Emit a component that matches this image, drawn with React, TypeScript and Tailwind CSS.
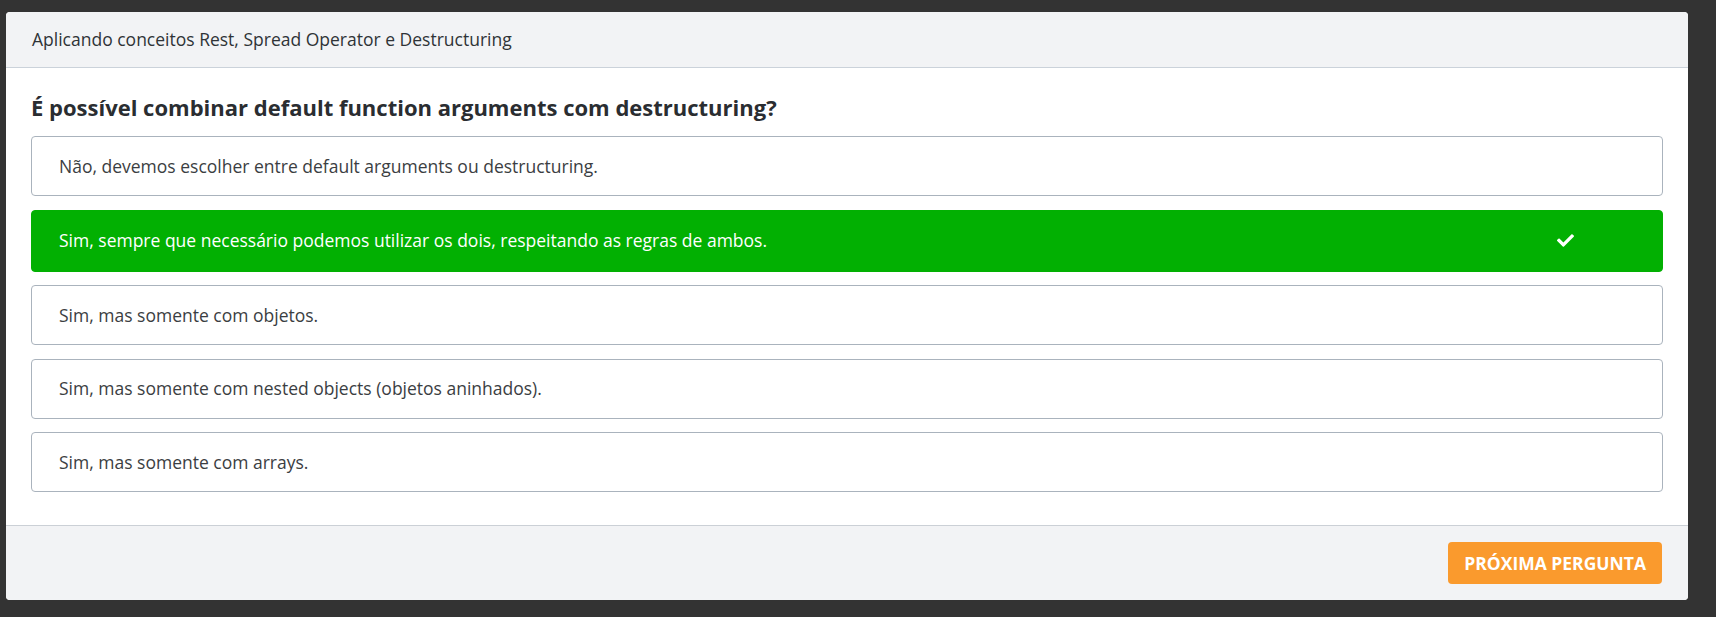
import React from "react";
import { FaCheck } from "react-icons/fa";

const options = [
  { text: "Não, devemos escolher entre default arguments ou destructuring.", correct: false },
  { text: "Sim, sempre que necessário podemos utilizar os dois, respeitando as regras de ambos.", correct: true },
  { text: "Sim, mas somente com objetos.", correct: false },
  { text: "Sim, mas somente com nested objects (objetos aninhados).", correct: false },
  { text: "Sim, mas somente com arrays.", correct: false },
];

const App: React.FC = () => {
  return (
    <div className="min-h-screen bg-[#333333] pt-3 pl-[6px] font-['Open_Sans','Noto_Sans',sans-serif]">
      <div className="w-[1682px] overflow-hidden rounded-[4px] bg-white">
        <div className="flex h-[56px] items-center border-b border-[#cbd2da] bg-[#f2f3f5] px-[26px]">
          <span className="text-[17.5px] text-[#2f3337]">
            Aplicando conceitos Rest, Spread Operator e Destructuring
          </span>
        </div>

        <div className="px-[25px] pt-[24px] pb-[33px]">
          <h2 className="mb-[14px] text-[22px] leading-[30px] font-bold text-[#2a2d31]">
            É possível combinar default function arguments com destructuring?
          </h2>

          <div className="flex flex-col gap-[13.5px]">
            {options.map((opt) => (
              <div
                key={opt.text}
                className={`flex items-center rounded-[4px] border px-[27px] text-[17.5px] ${
                  opt.correct
                    ? "h-[62px] border-[#02b002] bg-[#02b002] text-white"
                    : "h-[60px] border-[#aab3bd] bg-white text-[#3b3e42]"
                }`}
              >
                <span>{opt.text}</span>
                {opt.correct && (
                  <FaCheck className="mr-[61px] ml-auto h-[17px] w-[17px] text-white" />
                )}
              </div>
            ))}
          </div>
        </div>

        <div className="flex h-[75px] items-center justify-end border-t border-[#cbd0d6] bg-[#f2f3f5] pr-[26px]">
          <button className="h-[42px] rounded-[4px] bg-[#fa9a2d] px-4 text-[17.5px] font-bold text-white uppercase">
            Próxima pergunta
          </button>
        </div>
      </div>
    </div>
  );
};

export default App;
